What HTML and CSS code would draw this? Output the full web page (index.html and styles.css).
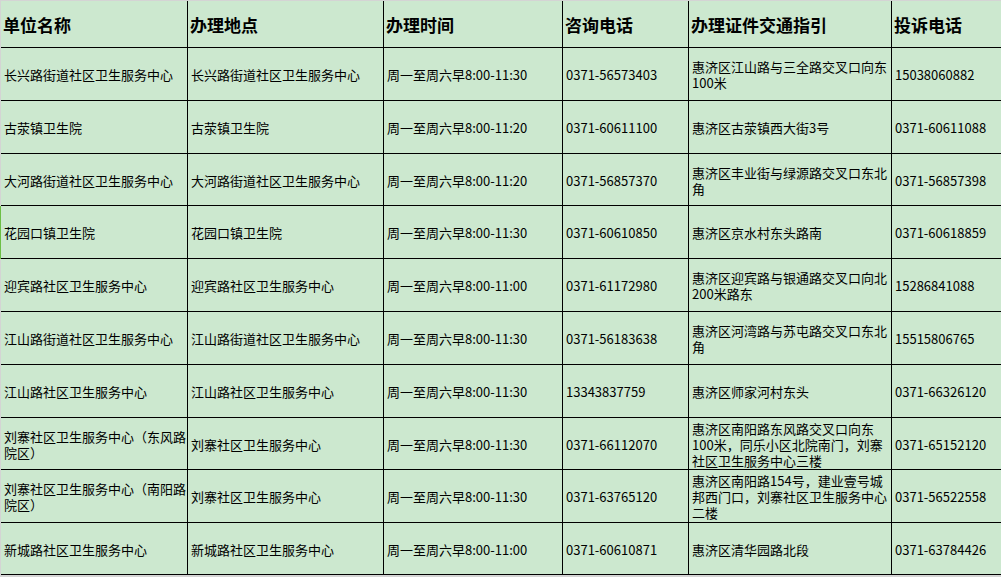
FILE: index.html
```html
<!DOCTYPE html>
<html lang="zh-CN">
<head>
<meta charset="utf-8">
<title>办理地点</title>
<link rel="stylesheet" href="styles.css">
</head>
<body>
<div class="sheet">
  <div class="c h">单位名称</div><div class="c h">办理地点</div><div class="c h">办理时间</div><div class="c h">咨询电话</div><div class="c h">办理证件交通指引</div><div class="c h">投诉电话</div>

  <div class="c">长兴路街道社区卫生服务中心</div><div class="c">长兴路街道社区卫生服务中心</div><div class="c">周一至周六早8:00-11:30</div><div class="c">0371-56573403</div><div class="c">惠济区江山路与三全路交叉口向东<br>100米</div><div class="c">15038060882</div>

  <div class="c">古荥镇卫生院</div><div class="c">古荥镇卫生院</div><div class="c">周一至周六早8:00-11:20</div><div class="c">0371-60611100</div><div class="c">惠济区古荥镇西大街3号</div><div class="c">0371-60611088</div>

  <div class="c">大河路街道社区卫生服务中心</div><div class="c">大河路街道社区卫生服务中心</div><div class="c">周一至周六早8:00-11:20</div><div class="c">0371-56857370</div><div class="c">惠济区丰业街与绿源路交叉口东北<br>角</div><div class="c">0371-56857398</div>

  <div class="c sel">花园口镇卫生院</div><div class="c">花园口镇卫生院</div><div class="c">周一至周六早8:00-11:30</div><div class="c">0371-60610850</div><div class="c">惠济区京水村东头路南</div><div class="c">0371-60618859</div>

  <div class="c">迎宾路社区卫生服务中心</div><div class="c">迎宾路社区卫生服务中心</div><div class="c">周一至周六早8:00-11:00</div><div class="c">0371-61172980</div><div class="c">惠济区迎宾路与银通路交叉口向北<br>200米路东</div><div class="c">15286841088</div>

  <div class="c">江山路街道社区卫生服务中心</div><div class="c">江山路街道社区卫生服务中心</div><div class="c">周一至周六早8:00-11:30</div><div class="c">0371-56183638</div><div class="c">惠济区河湾路与苏屯路交叉口东北<br>角</div><div class="c">15515806765</div>

  <div class="c">江山路社区卫生服务中心</div><div class="c">江山路社区卫生服务中心</div><div class="c">周一至周六早8:00-11:30</div><div class="c">13343837759</div><div class="c">惠济区师家河村东头</div><div class="c">0371-66326120</div>

  <div class="c">刘寨社区卫生服务中心（东风路<br>院区）</div><div class="c">刘寨社区卫生服务中心</div><div class="c">周一至周六早8:00-11:30</div><div class="c">0371-66112070</div><div class="c">惠济区南阳路东风路交叉口向东<br>100米，同乐小区北院南门，刘寨<br>社区卫生服务中心三楼</div><div class="c">0371-65152120</div>

  <div class="c">刘寨社区卫生服务中心（南阳路<br>院区）</div><div class="c">刘寨社区卫生服务中心</div><div class="c">周一至周六早8:00-11:30</div><div class="c">0371-63765120</div><div class="c">惠济区南阳路154号，建业壹号城<br>邦西门口，刘寨社区卫生服务中心<br>二楼</div><div class="c">0371-56522558</div>

  <div class="c">新城路社区卫生服务中心</div><div class="c">新城路社区卫生服务中心</div><div class="c">周一至周六早8:00-11:00</div><div class="c">0371-60610871</div><div class="c">惠济区清华园路北段</div><div class="c">0371-63784426</div>
</div>
</body>
</html>
```

FILE: styles.css
```css
html, body {
  margin: 0;
  padding: 0;
}
body {
  background: #d4d4d4;
  overflow: hidden;
  width: 1001px;
  height: 577px;
  font-family: "Noto Sans CJK SC", "Noto Sans", sans-serif;
  color: #000;
}
.sheet {
  display: grid;
  grid-template-columns: 187px 196px 179px 126px 203px 109px;
  grid-template-rows: 47px 53px 53px 52px 53px 53px 53px 53px 52px 53px 52px;
  margin: 1px 0 0 1px;
  width: 1000px;
  background: #cce8cf;
}
.c {
  box-sizing: border-box;
  border-right: 1px solid #000;
  border-bottom: 1px solid #000;
  display: flex;
  align-items: center;
  padding: 2px 0 0 3px;
  font-size: 13px;
  line-height: 16px;
  white-space: nowrap;
  overflow: hidden;
}
.c:nth-child(6n) {
  border-right: none;
}
.c.h {
  font-size: 17px;
  font-weight: bold;
  line-height: 20px;
  padding-left: 2px;
}
.c.sel {
  box-shadow: -1px 0 0 #6cbf45;
}
```
